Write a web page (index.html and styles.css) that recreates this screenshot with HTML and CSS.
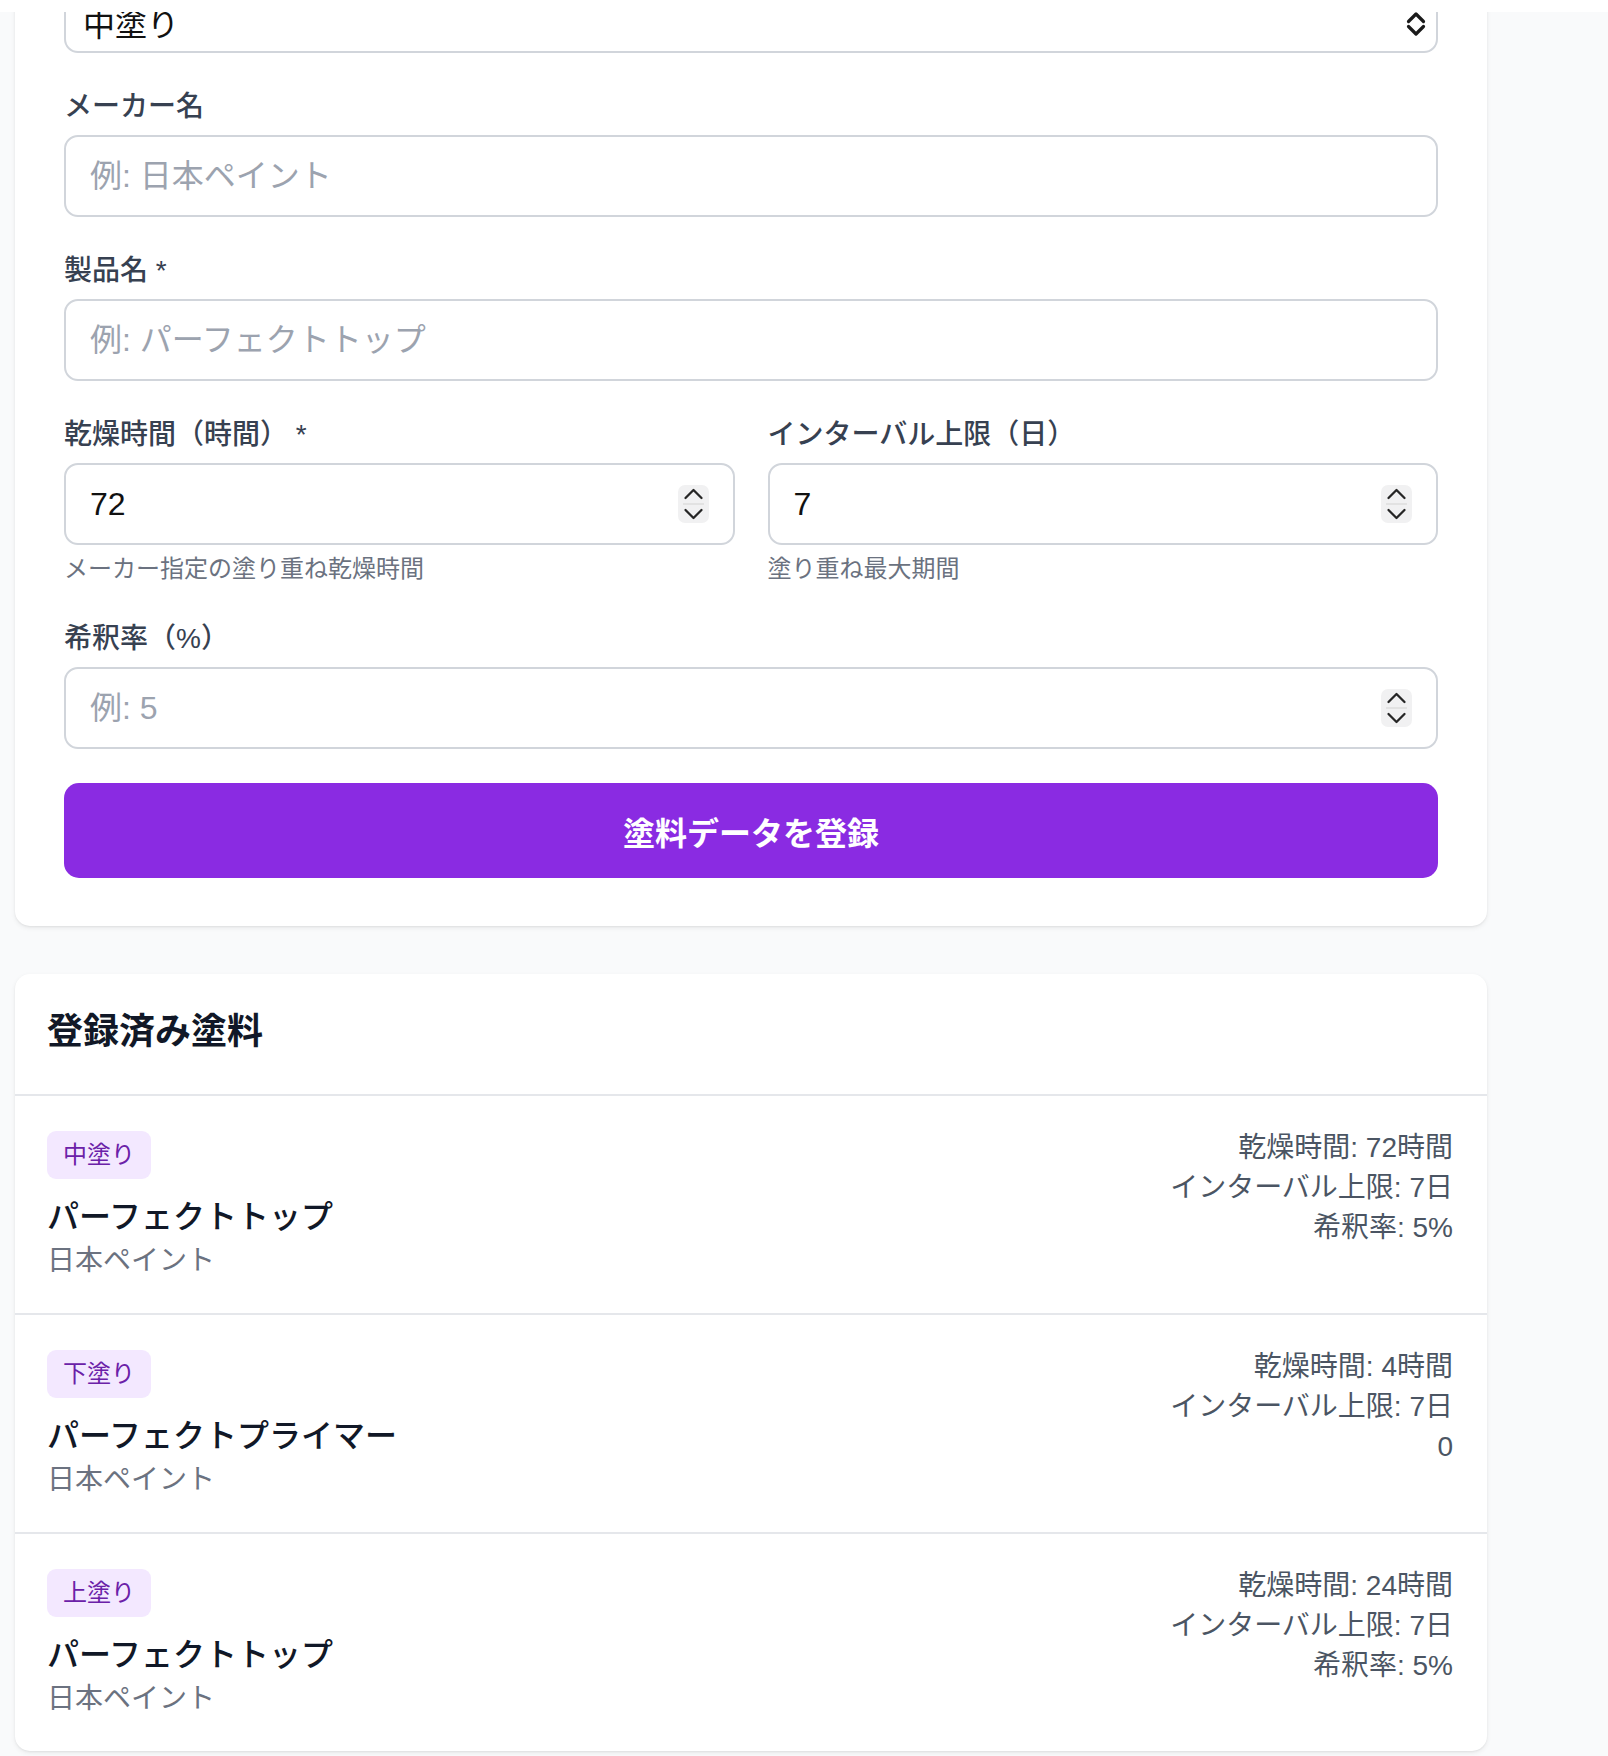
FILE: index.html
```html
<!DOCTYPE html>
<html lang="ja">
<head>
<meta charset="utf-8">
<title>塗料データ</title>
<link rel="stylesheet" href="styles.css">
</head>
<body>
<div class="topbar"></div>
<main class="page">
  <section class="card form-card">
    <div class="field">
      <div class="control-wrap">
        <select class="control select">
          <option>中塗り</option>
        </select>
        <svg class="select-arrow" width="20" height="26" viewBox="0 0 20 26" aria-hidden="true">
          <path d="M2.5 10.5 L10 3 L17.5 10.5" fill="none" stroke="#1a1a1a" stroke-width="3.2" stroke-linecap="round" stroke-linejoin="round"/>
          <path d="M2.5 15.5 L10 23 L17.5 15.5" fill="none" stroke="#1a1a1a" stroke-width="3.2" stroke-linecap="round" stroke-linejoin="round"/>
        </svg>
      </div>
    </div>

    <div class="field">
      <label class="label">メーカー名</label>
      <input class="control input" type="text" placeholder="例: 日本ペイント">
    </div>

    <div class="field">
      <label class="label">製品名 *</label>
      <input class="control input" type="text" placeholder="例: パーフェクトトップ">
    </div>

    <div class="grid2">
      <div class="field">
        <label class="label">乾燥時間（時間） *</label>
        <div class="control-wrap">
          <input class="control input number" type="number" value="72">
          <svg class="spinner" width="31" height="38" viewBox="0 0 31 38" aria-hidden="true">
            <rect x="0" y="0" width="31" height="38" rx="7" fill="#f1f1f2"/>
            <path d="M7.5 13 L15.5 5 L23.5 13" fill="none" stroke="#262626" stroke-width="2.3" stroke-linecap="round" stroke-linejoin="round"/>
            <line x1="5" y1="19" x2="26" y2="19" stroke="#dcdcdc" stroke-width="1.5"/>
            <path d="M7.5 25 L15.5 33 L23.5 25" fill="none" stroke="#262626" stroke-width="2.3" stroke-linecap="round" stroke-linejoin="round"/>
          </svg>
        </div>
        <p class="hint">メーカー指定の塗り重ね乾燥時間</p>
      </div>
      <div class="field">
        <label class="label">インターバル上限（日）</label>
        <div class="control-wrap">
          <input class="control input number" type="number" value="7">
          <svg class="spinner" width="31" height="38" viewBox="0 0 31 38" aria-hidden="true">
            <rect x="0" y="0" width="31" height="38" rx="7" fill="#f1f1f2"/>
            <path d="M7.5 13 L15.5 5 L23.5 13" fill="none" stroke="#262626" stroke-width="2.3" stroke-linecap="round" stroke-linejoin="round"/>
            <line x1="5" y1="19" x2="26" y2="19" stroke="#dcdcdc" stroke-width="1.5"/>
            <path d="M7.5 25 L15.5 33 L23.5 25" fill="none" stroke="#262626" stroke-width="2.3" stroke-linecap="round" stroke-linejoin="round"/>
          </svg>
        </div>
        <p class="hint">塗り重ね最大期間</p>
      </div>
    </div>

    <div class="field">
      <label class="label">希釈率（%）</label>
      <div class="control-wrap">
        <input class="control input number" type="number" placeholder="例: 5">
        <svg class="spinner" width="31" height="38" viewBox="0 0 31 38" aria-hidden="true">
          <rect x="0" y="0" width="31" height="38" rx="7" fill="#f1f1f2"/>
          <path d="M7.5 13 L15.5 5 L23.5 13" fill="none" stroke="#262626" stroke-width="2.3" stroke-linecap="round" stroke-linejoin="round"/>
          <line x1="5" y1="19" x2="26" y2="19" stroke="#dcdcdc" stroke-width="1.5"/>
          <path d="M7.5 25 L15.5 33 L23.5 25" fill="none" stroke="#262626" stroke-width="2.3" stroke-linecap="round" stroke-linejoin="round"/>
        </svg>
      </div>
    </div>

    <button class="submit" type="button">塗料データを登録</button>
  </section>

  <section class="card list-card">
    <h2 class="list-title">登録済み塗料</h2>
    <ul class="paint-list">
      <li class="paint">
        <div class="paint-main">
          <span class="badge">中塗り</span>
          <div class="paint-name">パーフェクトトップ</div>
          <div class="paint-maker">日本ペイント</div>
        </div>
        <div class="paint-meta">
          <div>乾燥時間: 72時間</div>
          <div>インターバル上限: 7日</div>
          <div>希釈率: 5%</div>
        </div>
      </li>
      <li class="paint">
        <div class="paint-main">
          <span class="badge">下塗り</span>
          <div class="paint-name">パーフェクトプライマー</div>
          <div class="paint-maker">日本ペイント</div>
        </div>
        <div class="paint-meta">
          <div>乾燥時間: 4時間</div>
          <div>インターバル上限: 7日</div>
          <div>0</div>
        </div>
      </li>
      <li class="paint">
        <div class="paint-main">
          <span class="badge">上塗り</span>
          <div class="paint-name">パーフェクトトップ</div>
          <div class="paint-maker">日本ペイント</div>
        </div>
        <div class="paint-meta">
          <div>乾燥時間: 24時間</div>
          <div>インターバル上限: 7日</div>
          <div>希釈率: 5%</div>
        </div>
      </li>
    </ul>
  </section>
</main>
</body>
</html>
```

FILE: styles.css
```css
* {
  box-sizing: border-box;
}

html, body {
  margin: 0;
  padding: 0;
}

body {
  background: #f9fafb;
  font-family: "Liberation Sans", "Noto Sans CJK JP", sans-serif;
  color: #111827;
  min-height: 1756px;
}

.topbar {
  position: fixed;
  top: 0;
  left: 0;
  right: 0;
  height: 12px;
  background: #ffffff;
  z-index: 10;
}

.page {
  width: 1472px;
  margin-left: 15px;
  padding-bottom: 40px;
}

.card {
  background: #ffffff;
  border-radius: 15px;
  box-shadow: 0 2px 5px rgba(0, 0, 0, 0.07), 0 1px 2px rgba(0, 0, 0, 0.05);
}

.form-card {
  margin-top: -51px;
  padding: 48px 49px;
  display: flex;
  flex-direction: column;
  gap: 34px;
}

.field {
  display: flex;
  flex-direction: column;
  min-width: 0;
}

.label {
  font-size: 28px;
  line-height: 40px;
  font-weight: 500;
  color: #374151;
  margin-bottom: 8px;
}

.control-wrap {
  position: relative;
}

.control {
  display: block;
  width: 100%;
  border: 2px solid #d1d5db;
  border-radius: 14px;
  background: #ffffff;
  font-family: "Liberation Sans", "Noto Sans CJK JP", sans-serif;
  color: #111111;
  outline: none;
}

.select {
  height: 56px;
  font-size: 32px;
  padding: 0 60px 0 17px;
  -webkit-appearance: none;
  appearance: none;
}

.select-arrow {
  position: absolute;
  right: 12px;
  top: 14px;
  pointer-events: none;
}

.input {
  height: 82px;
  font-size: 32px;
  padding: 0 24px;
}

.input::placeholder {
  color: #9ca3af;
  opacity: 1;
}

.number {
  -moz-appearance: textfield;
}

.number::-webkit-inner-spin-button,
.number::-webkit-outer-spin-button {
  -webkit-appearance: none;
  margin: 0;
}

.spinner {
  position: absolute;
  right: 26px;
  top: 22px;
  pointer-events: none;
}

.grid2 {
  display: grid;
  grid-template-columns: 1fr 1fr;
  column-gap: 33px;
}

.hint {
  margin: 8px 0 0;
  font-size: 24px;
  line-height: 32px;
  color: #6b7280;
}

.submit {
  height: 95px;
  border: none;
  border-radius: 15px;
  background: #8a2be2;
  color: #ffffff;
  font-family: "Liberation Sans", "Noto Sans CJK JP", sans-serif;
  font-size: 32px;
  font-weight: 700;
  letter-spacing: 0;
}

.list-card {
  margin-top: 48px;
}

.list-title {
  margin: 0;
  padding: 32px 32px 36px;
  font-size: 36px;
  line-height: 52px;
  font-weight: 700;
  color: #111827;
  border-bottom: 2px solid #e5e7eb;
}

.paint-list {
  list-style: none;
  margin: 0;
  padding: 0;
}

.paint {
  display: flex;
  justify-content: space-between;
  align-items: flex-start;
  padding: 35px 34px 32px 32px;
  border-bottom: 2px solid #e5e7eb;
}

.paint:last-child {
  border-bottom: none;
}

.paint-main {
  display: flex;
  flex-direction: column;
  align-items: flex-start;
}

.badge {
  display: inline-block;
  font-size: 24px;
  line-height: 32px;
  padding: 8px 16px;
  border-radius: 9px;
  background: #f3e8ff;
  color: #6b21a8;
  margin-bottom: 14px;
}

.paint-name {
  font-size: 32px;
  line-height: 48px;
  font-weight: 500;
  color: #111827;
}

.paint-maker {
  font-size: 28px;
  line-height: 40px;
  color: #6b7280;
}

.paint-meta {
  margin-top: -3px;
  text-align: right;
  font-size: 28px;
  line-height: 40px;
  color: #4b5563;
}
```
